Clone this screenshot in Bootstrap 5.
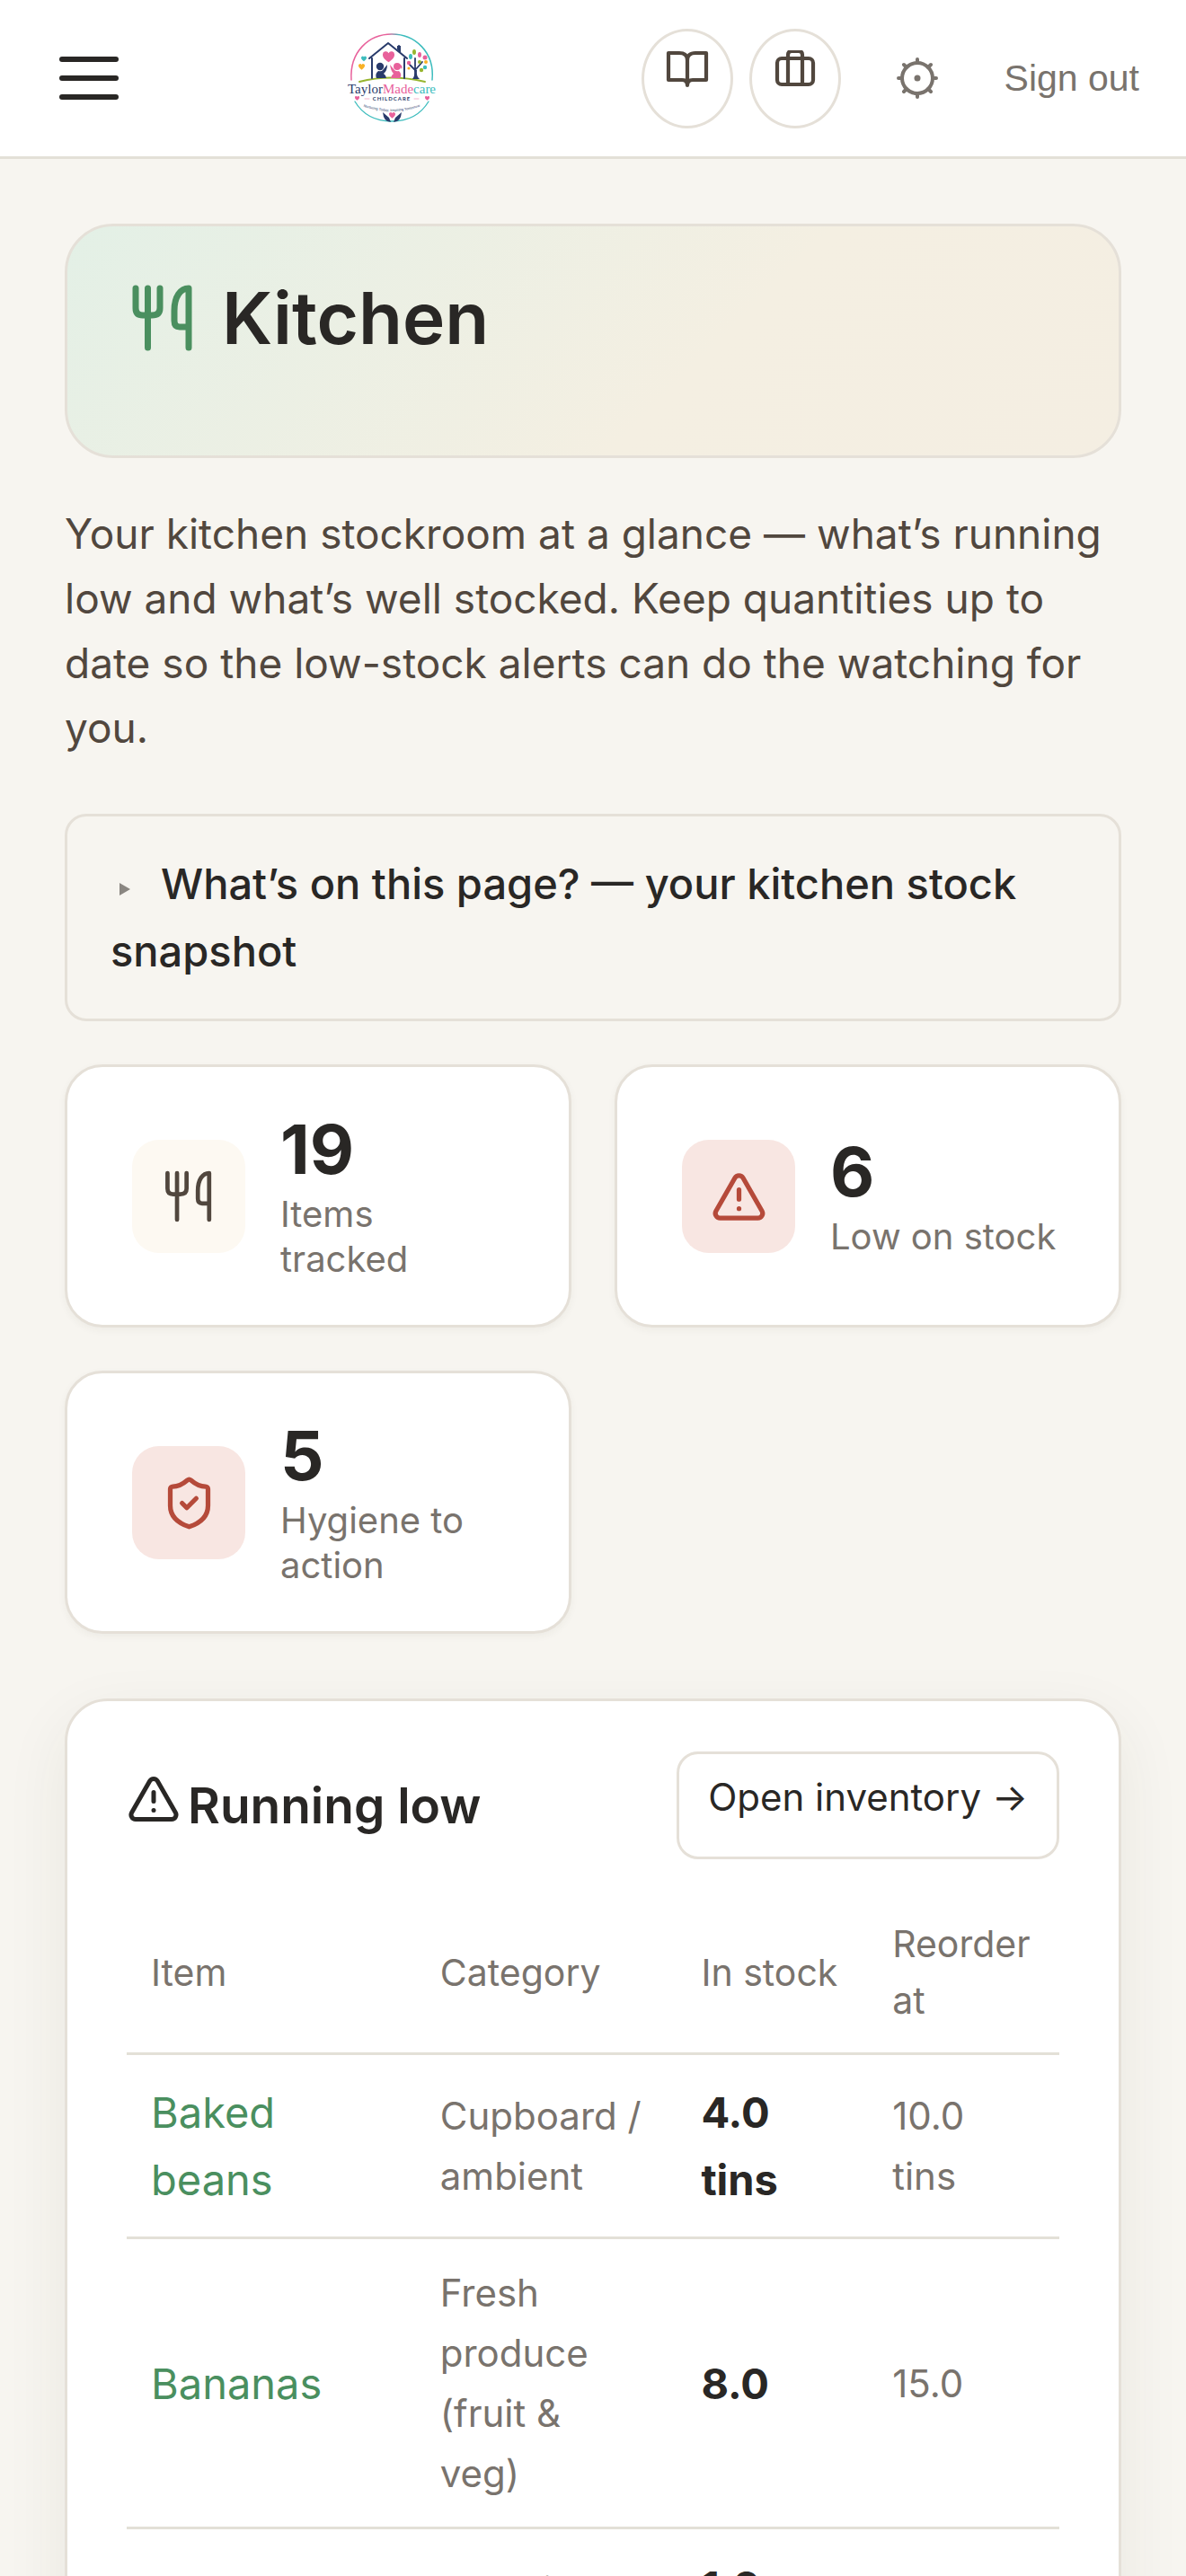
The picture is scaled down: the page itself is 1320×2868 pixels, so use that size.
<!DOCTYPE html>
<html lang="en">
<head>
<meta charset="utf-8">
<meta name="viewport" content="width=device-width, initial-scale=1">
<title>Kitchen – TaylorMadecare</title>
<link href="https://cdn.jsdelivr.net/npm/bootstrap@5.3.0/dist/css/bootstrap.min.css" rel="stylesheet">
<style>
:root{--ink:#292725;--soft:#51473e;--muted:#79736d;--line:#e5e0d8;--green:#4a8f5f;--red:#b54a3a;--paper:#f7f5f0}
body{font-family:Inter,"Noto Sans",sans-serif;font-size:47px;line-height:75px;color:var(--ink);background:var(--paper)}
svg{display:block;fill:none;stroke:currentColor;stroke-linecap:round;stroke-linejoin:round}
.app-shell{overflow-y:auto;scrollbar-width:none}
.app-shell::-webkit-scrollbar{display:none}
.topbar{height:177px;border-bottom:3px solid #e3e0d7;padding:0 52px 0 66px}
.burger{width:66px;height:48px;border:0;padding:0;background:none;display:flex;flex-direction:column;justify-content:space-between}
.burger span{height:6px;border-radius:3px;background:var(--ink)}
.brand-link{margin-left:250px}
.round-btn{width:102px;height:111px;border:3px solid var(--line);border-radius:50%;background:#fff;color:var(--soft);padding:21px 0 0;display:flex;justify-content:center}
.round-btn + .round-btn{margin-left:18px}
.gear-btn{border:0;background:none;padding:0;color:var(--muted);margin-left:60px}
.signout{font:41px/48px "Liberation Sans",sans-serif;color:var(--muted);text-decoration:none;margin-left:72px}
.page-main{padding:72px}
.hero{border:3px solid var(--line);border-radius:54px;height:261px;padding:57px 64px;background:linear-gradient(135deg,#e3f0e6 0%,#f4efe2 60%,#f4eee2 100%)}
.hero h1{font-size:80px;line-height:90px;font-weight:600;gap:24px}
.hero svg{color:var(--green)}
.intro{font-size:46px;line-height:72px;color:var(--soft);margin:48px 0 60px}
.about-box{border:3px solid var(--line);border-radius:24px;padding:37px 48px 38px;font-weight:500}
.about-box summary{list-style:none}
.about-box summary::before{content:"";display:inline-block;border-left:12px solid #8a8681;border-top:7px solid transparent;border-bottom:7px solid transparent;margin:0 34px 4px 10px}
.stat-grid{display:grid;grid-template-columns:1fr 1fr;gap:48px;margin:48px 0 72px}
.stat{background:#fff;border:3px solid var(--line);border-radius:42px;padding:49px 66px 48px 72px;box-shadow:0 3px 9px rgba(60,50,30,.05);gap:39px}
.tile{width:126px;height:126px;border-radius:30px;background:#fdf9f2;color:var(--soft);flex:none}
.tile.alerting{background:#f8e6e2;color:var(--red)}
.figure-num{font-size:76px;line-height:84px;font-weight:700;margin-bottom:6px}
.figure-label{font-size:40px;line-height:50px;color:var(--muted)}
.panel{background:#fff;border:3px solid var(--line);border-radius:48px;padding:56px 66px;box-shadow:0 24px 72px rgba(60,50,30,.07)}
.panel h2{font-size:55px;line-height:74px;font-weight:600}
.open-btn{border:3px solid var(--line);border-radius:24px;height:120px;padding:15px 32px 0;font-size:42px;line-height:66px;color:var(--ink);text-decoration:none}
.stock{width:100%;margin-top:37px;table-layout:fixed}
.stock th,.stock td{padding:26px 12px 26px 27px;border-bottom:3px solid #e3e0d7;vertical-align:middle}
.stock th{font-size:41px;line-height:63px;font-weight:400;color:var(--muted)}
.stock .sub-cell{font-size:42px;line-height:67px;color:var(--muted)}
.stock a{color:var(--green);text-decoration:none}
.c1{width:31%}.c2{width:28%}.c3{width:20.5%}
</style>
</head>
<body>
<svg width="0" height="0" class="position-absolute" aria-hidden="true">
<defs>
<symbol id="fork" viewBox="0 0 84 84"><path d="M12 9v22q0 8 8 8h10q9 0 9-8V9M25.500 9v66M71 75V9c-9 0-16 9-16 25v11q0 7 6 7h10"/></symbol>
<symbol id="warn" viewBox="0 0 24 24"><path d="m21.730 18-8-14a2 2 0 0 0-3.480 0l-8 14A2 2 0 0 0 4 21h16a2 2 0 0 0 1.730-3M12 9v4M12 17h.01"/></symbol>
<symbol id="heart" viewBox="0 0 10 10"><path d="M5 9.500C1 6.500 0 5 0 3a2.600 2.600 0 0 1 5-1.200A2.600 2.600 0 0 1 10 3c0 2-1 3.500-5 6.500z" stroke="none"/></symbol>
</defs>
</svg>
<div class="app-shell vh-100">
<header class="topbar bg-white d-flex align-items-center">
  <button class="burger" type="button" aria-label="Menu"><span></span><span></span><span></span></button>
  <a href="#" class="brand-link" aria-label="TaylorMadecare Childcare">
    <svg width="108" height="108" viewBox="0 0 108 108">
      <defs><linearGradient id="ring"><stop offset=".45" stop-color="#e8619b"/><stop offset=".6" stop-color="#3cbcbd"/></linearGradient></defs>
      <path d="M9 56C7 25 28 5 54 5s48 20 45 51" stroke="url(#ring)" stroke-width="1.500"/>
      <path d="M13 80c9 15 24 22 41 22s32-7 41-22" stroke="#3cbcbd" stroke-width="1.300"/>
      <path d="M18 58q35-9 73 0" stroke="#97b52f" stroke-width="2"/>
      <path d="M32 54V32M68 54V32M29 32l21-17 21 17M62 22v-4" stroke="#293b6b" stroke-width="2"/>
      <path d="M60 18h4v8l-4-4z" fill="#293b6b" stroke="none"/>
      <g fill="#e8619b"><use href="#heart" x="43" y="24" width="15" height="13"/><use href="#heart" x="13" y="74" width="5" height="5"/><use href="#heart" x="91" y="74" width="5" height="5"/><use href="#heart" x="51" y="92" width="7" height="7"/></g>
      <use href="#heart" x="20" y="29" width="6" height="7" fill="#3cbcbd"/><use href="#heart" x="17" y="38" width="7" height="7" fill="#f8b126"/>
      <circle cx="41" cy="41" r="4.200" fill="#293b6b" stroke="none"/><path d="M37 54q-2-5 2-8 4 1 5-1l5-6q0 7-4 10 3 2 3 5z" fill="#293b6b" stroke="none"/>
      <circle cx="60" cy="41" r="4" fill="#e8619b" stroke="none"/><path d="M53 54q1-4 3-5-3-3-4-10l5 6q2 2 5 1 4 4 1 8zM62 38q5 2 3 6z" fill="#e8619b" stroke="none"/>
      <path d="M80 54q1-8 0-12m0 3-6-6m6 2v-9m1 12 7-8" stroke="#293b6b" stroke-width="1.800"/><path d="M77 55q3-3 2-10h3q-1 7 3 10z" fill="#293b6b" stroke="none"/>
      <g stroke="none"><g fill="#97b52f"><ellipse cx="79" cy="25" rx="2" ry="3"/><circle cx="85" cy="36" r="2"/><circle cx="87" cy="45" r="2.200"/></g><g fill="#e8619b"><ellipse cx="85" cy="28" rx="2" ry="3"/><circle cx="91" cy="31" r="2.500"/><circle cx="73" cy="37" r="2.200"/></g><g fill="#3cbcbd"><ellipse cx="75" cy="30" rx="2" ry="3"/><circle cx="91" cy="42" r="2.200"/></g><g fill="#f8b126"><circle cx="92" cy="36" r="2"/><circle cx="73" cy="43" r="1.600"/></g></g>
      <g stroke="none" text-anchor="middle"><text x="54" y="71" font-family="Liberation Serif,serif" font-size="15" fill="#293b6b">Taylor<tspan fill="#e8619b">Made</tspan><tspan fill="#3cbcbd">care</tspan></text>
      <text x="54" y="79" font-family="Lato,sans-serif" font-size="6" font-weight="700" fill="#293b6b" letter-spacing="1">CHILDCARE</text>
      <path id="motto" d="M18 84q36 14 72 0"/><text font-family="Liberation Sans,sans-serif" font-size="4" fill="#293b6b"><textPath href="#motto" startOffset="50%">Nurturing Today, Inspiring Tomorrow</textPath></text></g>
      <path d="M29 77h-5M79 77h5" stroke="#f3b5ce" stroke-width="1"/>
      <path d="M53 103q-8 0-9-11l7 6zm3 0q8 0 9-11l-7 6z" fill="#293b6b" stroke="none"/>
    </svg>
  </a>
  <nav class="d-flex align-items-center ms-auto">
    <button class="round-btn" type="button" aria-label="Handbook"><svg width="48" height="42" viewBox="0 0 48 42" stroke-width="4.200"><path d="M3 3h12q9 0 9 8 0-8 9-8h12v30H30q-6 0-6 6 0-6-6-6H3zM24 11v28"/></svg></button>
    <button class="round-btn" type="button" aria-label="Work"><svg width="48" height="42" viewBox="0 0 48 42" stroke-width="4.200"><rect x="4" y="9" width="40" height="29" rx="5"/><path d="M16 38V9M32 38V9M16 9V5q0-4 4-4h8q4 0 4 4v4" /></svg></button>
    <button class="gear-btn" type="button" aria-label="Settings"><svg width="50" height="50" viewBox="0 0 50 50" stroke-width="4"><circle cx="25" cy="25" r="17"/><path d="M25 4v4M25 42v4M4 25h4M42 25h4M10 10l3 3M37 37l3 3M10 40l3-3M37 13l3-3"/><circle cx="25" cy="25" r="3.500" fill="currentColor" stroke="none"/></svg></button>
    <a class="signout" href="#">Sign out</a>
  </nav>
</header>
<main class="page-main">
  <section class="hero"><h1 class="d-flex align-items-center mb-0"><svg width="84" height="84" stroke-width="7"><use href="#fork"/></svg>Kitchen</h1></section>
  <p class="intro">Your kitchen stockroom at a glance — what’s running low and what’s well stocked. Keep quantities up to date so the low-stock alerts can do the watching for you.</p>
  <details class="about-box"><summary>What’s on this page? — your kitchen stock snapshot</summary></details>
  <section class="stat-grid">
    <div class="stat d-flex align-items-center"><div class="tile d-flex align-items-center justify-content-center"><svg width="66" height="66" stroke-width="6"><use href="#fork"/></svg></div><div><div class="figure-num">19</div><div class="figure-label">Items<br>tracked</div></div></div>
    <div class="stat d-flex align-items-center"><div class="tile alerting d-flex align-items-center justify-content-center"><svg width="63" height="63" stroke-width="2"><use href="#warn"/></svg></div><div><div class="figure-num">6</div><div class="figure-label text-nowrap">Low on stock</div></div></div>
    <div class="stat d-flex align-items-center"><div class="tile alerting d-flex align-items-center justify-content-center"><svg width="63" height="63" viewBox="0 0 24 24" stroke-width="2"><path d="M20 13c0 5-3.500 7.500-8 9-4.500-1.500-8-4-8-9V6a1 1 0 0 1 1-1c2 0 4.500-1.200 6.240-2.720a1.170 1.170 0 0 1 1.520 0C14.500 3.800 17 5 19 5a1 1 0 0 1 1 1zM9 12l2 2 4-4"/></svg></div><div><div class="figure-num">5</div><div class="figure-label">Hygiene to action</div></div></div>
  </section>
  <section class="panel">
    <div class="d-flex justify-content-between align-items-center">
      <h2 class="d-flex mb-0 gap-2"><svg width="60" height="60" stroke-width="2"><use href="#warn"/></svg>Running low</h2>
      <a class="open-btn" href="#">Open inventory →</a>
    </div>
    <table class="stock">
      <thead><tr><th class="c1" scope="col">Item</th><th class="c2" scope="col">Category</th><th class="c3" scope="col">In stock</th><th scope="col">Reorder at</th></tr></thead>
      <tbody>
        <tr><td><a href="#">Baked<br>beans</a></td><td class="sub-cell">Cupboard / ambient</td><td class="fw-bold">4.0<br>tins</td><td class="sub-cell">10.0<br>tins</td></tr>
        <tr><td><a href="#">Bananas</a></td><td class="sub-cell">Fresh produce<br>(fruit &amp;<br>veg)</td><td class="fw-bold">8.0</td><td class="sub-cell">15.0</td></tr>
        <tr><td><a href="#">Bleach</a></td><td class="sub-cell">Cleaning &amp; hygiene</td><td class="fw-bold">1.0<br>bottles</td><td class="sub-cell"></td></tr>
      </tbody>
    </table>
  </section>
</main>
</div>
<script src="https://cdn.jsdelivr.net/npm/bootstrap@5.3.0/dist/js/bootstrap.bundle.min.js"></script>
</body>
</html>
